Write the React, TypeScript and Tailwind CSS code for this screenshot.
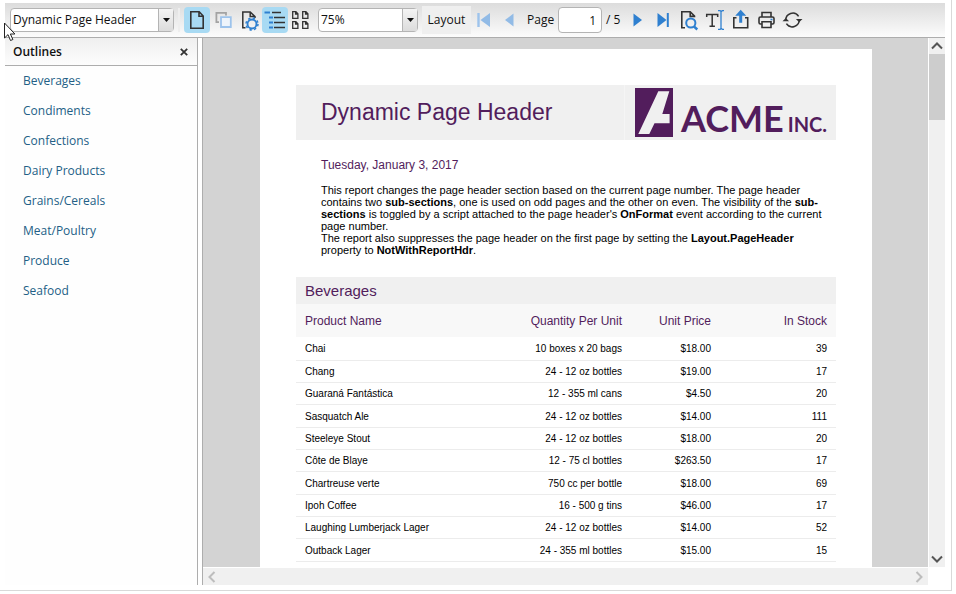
import { ReactNode } from "react";
import { clsx } from "clsx";

const outlines = [
  "Beverages",
  "Condiments",
  "Confections",
  "Dairy Products",
  "Grains/Cereals",
  "Meat/Poultry",
  "Produce",
  "Seafood",
];

const products = [
  { name: "Chai", quantity: "10 boxes x 20 bags", price: "$18.00", stock: 39 },
  { name: "Chang", quantity: "24 - 12 oz bottles", price: "$19.00", stock: 17 },
  { name: "Guaraná Fantástica", quantity: "12 - 355 ml cans", price: "$4.50", stock: 20 },
  { name: "Sasquatch Ale", quantity: "24 - 12 oz bottles", price: "$14.00", stock: 111 },
  { name: "Steeleye Stout", quantity: "24 - 12 oz bottles", price: "$18.00", stock: 20 },
  { name: "Côte de Blaye", quantity: "12 - 75 cl bottles", price: "$263.50", stock: 17 },
  { name: "Chartreuse verte", quantity: "750 cc per bottle", price: "$18.00", stock: 69 },
  { name: "Ipoh Coffee", quantity: "16 - 500 g tins", price: "$46.00", stock: 17 },
  { name: "Laughing Lumberjack Lager", quantity: "24 - 12 oz bottles", price: "$14.00", stock: 52 },
  { name: "Outback Lager", quantity: "24 - 355 ml bottles", price: "$15.00", stock: 15 },
];

const Icon = ({ children }: { children: ReactNode }) => (
  <svg width="26" height="26" viewBox="0 0 26 26" fill="none" stroke="#333" strokeWidth="1.6" aria-hidden="true">
    {children}
  </svg>
);

const ToolButton = ({ label, active, children }: { label: string; active?: boolean; children: ReactNode }) => (
  <button
    type="button"
    aria-label={label}
    aria-pressed={active}
    className={clsx("h-[26px] w-[26px] shrink-0 rounded-sm", active && "bg-[#a8daf3]")}
  >
    {children}
  </button>
);

const Combo = ({ label, value, className }: { label: string; value: string; className: string }) => (
  <div className={clsx("relative h-6 shrink-0 rounded-sm border border-[#b4b4b4] bg-white", className)}>
    <select
      aria-label={label}
      defaultValue={value}
      className="h-full w-full appearance-none bg-transparent pl-[2px] text-xs leading-5 outline-none"
    >
      <option>{value}</option>
    </select>
    <span className="pointer-events-none absolute inset-y-0 right-0 flex w-[15px] items-center justify-center border-l border-[#b4b4b4] bg-linear-to-b from-[#f4f4f4] to-[#dcdcdc]">
      <svg width="7" height="4" viewBox="0 0 7 4" aria-hidden="true">
        <path d="M0 0h7L3.5 4z" fill="#111" />
      </svg>
    </span>
  </div>
);

const Toolbar = () => (
  <div role="toolbar" className="flex h-[35px] shrink-0 items-center border-b border-[#adadad] bg-linear-to-b from-[#dcdcdc] to-[#fcfcfc] pl-[5px]">
    <Combo label="Report" value="Dynamic Page Header" className="w-[164px]" />
    <span className="mx-1 h-6 w-[2px] bg-[#eeeeee]" />
    <ToolButton label="Single page" active>
      <Icon>
        <path d="M6.8 4.8h8.4l4 4.2v12.2H6.8zM15 4.8V9.2h4.2" />
      </Icon>
    </ToolButton>
    <ToolButton label="Continuous">
      <Icon>
        <path d="M9 15.2H6.4V5.800h9.600V8.500" stroke="#a3a3a3" strokeWidth="1.8" />
        <path d="M11 10.200h9.800v9.800H11z" fill="#eef4fb" stroke="#9dc3ec" strokeWidth="1.8" />
      </Icon>
    </ToolButton>
    <ToolButton label="Page setup">
      <Icon>
        <path d="M9.500 20.800H6.800V5h7.400l4.800 4.600V11M14.200 5v4.600H19" strokeWidth="1.500" />
        <circle cx="16" cy="17" r="4.500" stroke="#2f80d0" strokeWidth="1.900" />
        <circle cx="16" cy="17" r="6" stroke="#2f80d0" strokeWidth="1.500" strokeDasharray="2.356 2.356" />
      </Icon>
    </ToolButton>
    <ToolButton label="Outlines" active>
      <Icon>
        <path d="M10 5.500h9M12 10.500h11M12 15.500h11M12 20.500h11" strokeWidth="1.600" />
        <path d="M2.500 5.500H8M7 10.500h4M7 15.500h4M7 20.500h4" stroke="#2f80d0" strokeWidth="1.800" />
      </Icon>
    </ToolButton>
    <ToolButton label="Thumbnails">
      <Icon>
        <path
          d="M4.700 4.700h3.200l2 2v4.600H4.700zM7.600 4.700V7h2.300M14.700 4.700h3.200l2 2v4.600h-5.200zM17.600 4.700V7h2.300M4.700 14.700h3.200l2 2v4.600H4.700zM7.600 14.700V17h2.300M14.700 14.700h3.200l2 2v4.600h-5.200zM17.600 14.700V17h2.300"
          strokeWidth="1.3"
        />
      </Icon>
    </ToolButton>
    <Combo label="Zoom" value="75%" className="ml-1 w-[100px]" />
    <button type="button" className="ml-1 h-7 w-[49px] shrink-0 bg-[#efefef]">
      Layout
    </button>
    <ToolButton label="First page">
      <Icon>
        <path d="M7.5 6v14" stroke="#9dc3ec" strokeWidth="2.4" />
        <path d="M19 6v14l-9.5-7z" fill="#92bbe6" stroke="none" />
      </Icon>
    </ToolButton>
    <ToolButton label="Previous page">
      <Icon>
        <path d="M16.5 6.5v13L8 13z" fill="#92bbe6" stroke="none" />
      </Icon>
    </ToolButton>
    <label htmlFor="page" className="ml-1 w-[31px] shrink-0">
      Page
    </label>
    <input
      id="page"
      type="text"
      defaultValue="1"
      className="h-[26px] w-11 shrink-0 rounded-sm border border-[#b4b4b4] bg-white pr-[5px] text-right outline-none"
    />
    <span className="ml-1 w-[18px] shrink-0 whitespace-nowrap">/ 5</span>
    <ToolButton label="Next page">
      <Icon>
        <path d="M9.5 6.5v13l8.500-6.500z" fill="#2f80d0" stroke="none" />
      </Icon>
    </ToolButton>
    <ToolButton label="Last page">
      <Icon>
        <path d="M7.500 6v14l9-7z" fill="#2f80d0" stroke="none" />
        <path d="M17.800 6v14" stroke="#2f80d0" strokeWidth="2" />
      </Icon>
    </ToolButton>
    <ToolButton label="Search">
      <Icon>
        <path d="M9 20.800H5.800V4.800h8.400l4.300 4.400v1M14.200 4.800v4.600h4.300" />
        <circle cx="14.800" cy="16" r="4.600" stroke="#2f80d0" strokeWidth="2" />
        <path d="M18 19.500l3.300 3" stroke="#2f80d0" strokeWidth="2.400" />
      </Icon>
    </ToolButton>
    <ToolButton label="Select text">
      <Icon>
        <path d="M4.700 10V7.500h11V10M10.200 7.500v11.800M7.500 19.300h5.400" strokeWidth="1.500" />
        <path d="M16 3.700h2.200l1 1 1-1H22M16 22.300h2.200l1-1 1 1H22M19 4.500v17" stroke="#2f80d0" strokeWidth="1.300" />
      </Icon>
    </ToolButton>
    <ToolButton label="Export">
      <Icon>
        <path d="M8.500 10.800H5.800v10h13.900v-10H17" />
        <path d="M12.700 2.800l5.500 6h-4v7h-3v-7h-4z" fill="#2f80d0" stroke="none" />
      </Icon>
    </ToolButton>
    <ToolButton label="Print">
      <Icon>
        <path d="M8 10V5.500h9V10M8 17H6.500Q5 17 5 15.500v-4Q5 10 6.500 10h12q1.500 0 1.500 1.500v4q0 1.500-1.500 1.500H17M8 14.800h9v5.700H8z" />
        <path d="M16.500 12.500h2" stroke="#2f80d0" />
      </Icon>
    </ToolButton>
    <ToolButton label="Refresh">
      <Icon>
        <path d="M5.800 13.500a7 7 0 0 1 12.800-4.200M19.200 12.500a7 7 0 0 1-12.800 4.200" strokeWidth="1.500" />
        <path d="M2.500 14.300l3.300-3.300 3.300 3.300zM15.900 11.900h6.600l-3.300 3.300z" fill="#333" stroke="none" />
      </Icon>
    </ToolButton>
  </div>
);

const Sidebar = () => (
  <aside className="w-[193px] shrink-0 border-r border-[#adadad] bg-[#fefefe]">
    <div className="flex h-7 items-center justify-between border-b border-[#adadad] bg-linear-to-b from-[#efefef] to-[#fdfdfd] pr-[9px] pl-2">
      <h2 className="font-semibold">Outlines</h2>
      <button type="button" aria-label="Close outlines">
        <svg width="8" height="8" viewBox="0 0 8 8" fill="none" stroke="#333" strokeWidth="1.8">
          <path d="M.8.8l6.400 6.400M7.200.8L.8 7.200" />
        </svg>
      </button>
    </div>
    <ul>
      {outlines.map((item) => (
        <li key={item} className="h-[30px] pl-[18px] leading-[30px]">
          <a href="#" className="text-[#235f86]">
            {item}
          </a>
        </li>
      ))}
    </ul>
  </aside>
);

const Logo = () => (
  <div className="flex h-full w-[212px] items-start border-l border-[#f5f5f5] pt-[3px] pl-[10px] text-[#521d5c]">
    <svg width="38" height="49" viewBox="0 0 38 49" className="shrink-0" aria-hidden="true">
      <path d="M0 0h38v49H0z" fill="#521d5c" />
      <path d="M23.300 3.300H34.300L27.300 26H34.600V35.300H19.500L14.300 46H3.300z" fill="#f0f0f0" />
    </svg>
    <div className="ml-2 flex items-baseline gap-1 pt-[8px] font-[Lato,sans-serif] leading-[44px]">
      <span className="text-[36px] font-bold">ACME</span>
      <span className="text-[20px] font-bold">INC.</span>
    </div>
  </div>
);

const Report = () => (
  <article className="mx-auto mt-[11px] min-h-[792px] w-[612px] bg-white px-9 pt-9 font-['Liberation_Sans',Arial,sans-serif] text-black">
    <header className="flex h-[55px] items-center justify-between bg-[#f0f0f0] pl-[25px]">
      <h1 className="text-[23px] text-[#521d5c]">Dynamic Page Header</h1>
      <Logo />
    </header>
    <p className="mt-4 pl-[25px] text-[12px] leading-[18px] text-[#521d5c]">Tuesday, January 3, 2017</p>
    <div className="mt-[10px] pr-3 pl-[25px] text-[11px] leading-3">
      <p>
        This report changes the page header section based on the current page number. The page header contains two{" "}
        <b>sub-sections</b>, one is used on odd pages and the other on even. The visibility of the{" "}
        <b>
          sub-
          <wbr />
          sections
        </b>{" "}
        is toggled by a script attached to the page header's <b>OnFormat</b> event according to the current page number.
      </p>
      <p>
        The report also suppresses the page header on the first page by setting the <b>Layout.PageHeader</b> property
        to <b>NotWithReportHdr</b>.
      </p>
    </div>
    <h2 className="mt-[21px] h-[27px] bg-[#f0f0f0] pl-[9px] text-[15px] leading-[27px] text-[#521d5c]">Beverages</h2>
    <table className="w-full table-fixed text-right text-[10px]">
      <thead>
        <tr className="h-[33px] bg-[#f8f8f8] text-[12px] text-[#521d5c]">
          <th className="w-[190px] pl-[9px] text-left font-normal">Product Name</th>
          <th className="w-[136px] font-normal">Quantity Per Unit</th>
          <th className="w-[89px] font-normal">Unit Price</th>
          <th className="pr-[9px] font-normal">In Stock</th>
        </tr>
      </thead>
      <tbody>
        {products.map((p) => (
          <tr key={p.name} className="h-[22px] border-b border-[#ececec] leading-4 nth-[3n+1]:h-[23px] [&>td]:pt-0.5">
            <td className="pl-[9px] text-left">{p.name}</td>
            <td>{p.quantity}</td>
            <td>{p.price}</td>
            <td className="pr-[9px]">{p.stock}</td>
          </tr>
        ))}
      </tbody>
    </table>
  </article>
);

const Chevron = ({ d, color }: { d: string; color: string }) => (
  <svg width="12" height="12" viewBox="0 0 12 12" fill="none" stroke={color} strokeWidth="2" aria-hidden="true">
    <path d={d} />
  </svg>
);

const Viewer = () => (
  <main className="ml-1 flex min-w-0 flex-1 flex-col border-l border-[#adadad]">
    <div className="flex min-h-0 flex-1">
      <div className="min-w-0 flex-1 overflow-hidden bg-[#d3d3d3] pl-px">
        <Report />
      </div>
      <div className="ml-px flex w-4 shrink-0 flex-col items-center bg-[#f0f0f0]">
        <button type="button" aria-label="Scroll up" className="flex h-4 shrink-0 items-center">
          <Chevron d="M1 8.500l5-5 5 5" color="#555" />
        </button>
        <div className="h-[66px] w-4 bg-[#cdcdcd]" />
        <button type="button" aria-label="Scroll down" className="mt-auto flex h-[17px] shrink-0 items-center">
          <Chevron d="M1 3.500l5 5 5-5" color="#555" />
        </button>
      </div>
    </div>
    <div className="mt-px mr-[17px] flex h-[17px] shrink-0 items-center justify-between bg-[#f0f0f0] px-[3px]">
      <button type="button" aria-label="Scroll left">
        <Chevron d="M8.500 1l-5 5 5 5" color="#bdbdbd" />
      </button>
      <button type="button" aria-label="Scroll right">
        <Chevron d="M3.500 1l5 5-5 5" color="#bdbdbd" />
      </button>
    </div>
  </main>
);

export default function App() {
  return (
    <div className="relative h-screen bg-white pr-1 pb-[3px] font-['Open_Sans','Noto_Sans',sans-serif] text-xs text-[#111]">
      <div className="flex h-full flex-col overflow-hidden border-r border-b border-[#d9d9d9] pt-[3px] pr-[6px] pb-[5px] pl-[5px]">
        <Toolbar />
        <div className="flex min-h-0 flex-1">
          <Sidebar />
          <Viewer />
        </div>
      </div>
      {/* mouse pointer */}
      <svg width="12" height="20" viewBox="0 0 12 20" className="absolute top-[22px] left-1" aria-hidden="true">
        <path d="M.5 1v15l3.500-3.400 2.500 5.900 2.400-1L6.400 12h4.500z" fill="#fff" stroke="#222" />
      </svg>
    </div>
  );
}
